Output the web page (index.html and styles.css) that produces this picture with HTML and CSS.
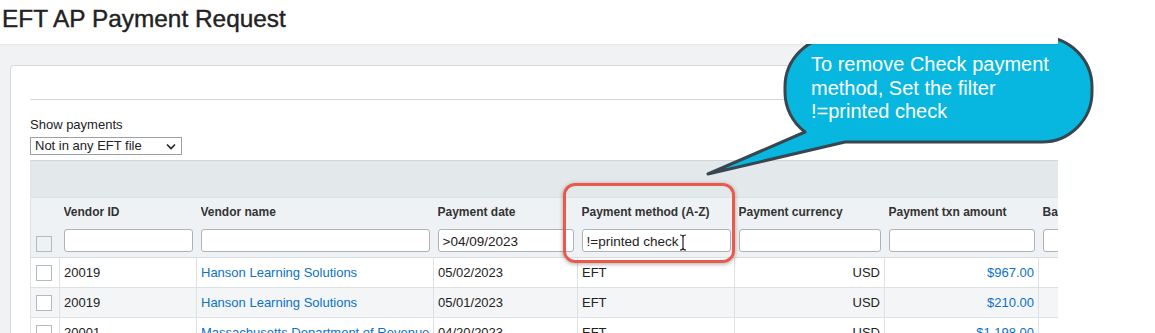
FILE: index.html
```html
<!DOCTYPE html>
<html lang="en">
<head>
<meta charset="utf-8">
<title>EFT AP Payment Request</title>
<link rel="stylesheet" href="styles.css">
</head>
<body>
<div class="app">
  <header class="page-head">
    <h1 class="page-title">EFT AP Payment Request</h1>
  </header>
  <main class="page-body">
    <section class="card">
      <div class="card-rule"></div>
      <div class="filter-block">
        <label class="filter-label" for="show">Show payments</label>
        <div class="select-wrap">
          <select id="show" class="select">
            <option>Not in any EFT file</option>
          </select>
          <svg class="select-chevron" width="10" height="7" viewBox="0 0 10 7"><path d="M1 1.5 L5 5.5 L9 1.5" fill="none" stroke="#222" stroke-width="1.6"/></svg>
        </div>
      </div>
      <div class="grid">
        <div class="grid-toolbar"></div>
        <table class="grid-table">
          <colgroup>
            <col class="c-check"><col class="c-vid"><col class="c-vname"><col class="c-date"><col class="c-method"><col class="c-cur"><col class="c-amt"><col class="c-bank">
          </colgroup>
          <thead>
            <tr>
              <th class="th-check"><span class="check check-head"></span></th>
              <th><div class="th-label">Vendor ID</div><input class="th-filter" type="text" value=""></th>
              <th><div class="th-label">Vendor name</div><input class="th-filter" type="text" value=""></th>
              <th><div class="th-label">Payment date</div><input class="th-filter" type="text" value="&gt;04/09/2023"></th>
              <th><div class="th-label">Payment method (A-Z)</div><input class="th-filter" type="text" value="!=printed check"></th>
              <th><div class="th-label">Payment currency</div><input class="th-filter" type="text" value=""></th>
              <th><div class="th-label">Payment txn amount</div><input class="th-filter" type="text" value=""></th>
              <th><div class="th-label">Bank account</div><input class="th-filter" type="text" value=""></th>
            </tr>
          </thead>
          <tbody>
            <tr>
              <td class="td-check"><span class="check"></span></td>
              <td>20019</td>
              <td><a class="link" href="#">Hanson Learning Solutions</a></td>
              <td>05/02/2023</td>
              <td>EFT</td>
              <td class="num">USD</td>
              <td class="num"><a class="link" href="#">$967.00</a></td>
              <td></td>
            </tr>
            <tr class="alt">
              <td class="td-check"><span class="check"></span></td>
              <td>20019</td>
              <td><a class="link" href="#">Hanson Learning Solutions</a></td>
              <td>05/01/2023</td>
              <td>EFT</td>
              <td class="num">USD</td>
              <td class="num"><a class="link" href="#">$210.00</a></td>
              <td></td>
            </tr>
            <tr>
              <td class="td-check"><span class="check"></span></td>
              <td>20001</td>
              <td><a class="link" href="#">Massachusetts Department of Revenue</a></td>
              <td>04/20/2023</td>
              <td>EFT</td>
              <td class="num">USD</td>
              <td class="num"><a class="link" href="#">$1,198.00</a></td>
              <td></td>
            </tr>
          </tbody>
        </table>
      </div>
    </section>
  </main>
</div>

<div class="highlight"></div>
<svg class="ibeam" width="8" height="17" viewBox="0 0 8 17"><path d="M1 1 Q4 1 4 3 L4 14 Q4 16 1 16 M7 1 Q4 1 4 3 M4 14 Q4 16 7 16" fill="none" stroke="#222" stroke-width="1.2"/></svg>

<div class="callout">
  <svg class="callout-shape" width="400" height="150" viewBox="0 0 400 150">
    <path d="M105 102 L8 144 L145 112 L342 112 A50 50 0 0 0 392 62 L392 57 A50 50 0 0 0 342 7 L135 7 A50 50 0 0 0 85 57 L85 62 A50 50 0 0 0 105 102 Z" fill="#07b7e0" stroke="#37464f" stroke-width="3" stroke-linejoin="round"/>
  </svg>
  <p class="callout-text">To remove Check payment<br>method, Set the filter<br>!=printed check</p>
</div>
</body>
</html>
```

FILE: styles.css
```css
html, body {
  margin: 0;
  padding: 0;
  background: #ffffff;
}
body {
  font-family: "Liberation Sans", Arial, sans-serif;
  color: #222;
  width: 1155px;
  height: 333px;
  overflow: hidden;
  position: relative;
}
.app {
  width: 1058px;
  height: 333px;
  overflow: hidden;
}
.page-head {
  height: 44px;
  background: #fff;
  box-shadow: 0 1px 2px rgba(0, 0, 0, 0.06);
  position: relative;
  z-index: 1;
}
.page-title {
  margin: 0;
  padding: 5px 0 0 2px;
  font-size: 24.4px;
  font-weight: normal;
  color: #222;
  -webkit-text-stroke: 0.4px #222;
  line-height: 28px;
}
.page-body {
  background: #f0f2f4;
  padding: 21px 0 0 10px;
  height: 300px;
}
.card {
  width: 1200px;
  background: #fff;
  border: 1px solid #d3d8db;
  border-radius: 4px 0 0 0;
  padding: 0 0 0 19px;
  height: 300px;
}
.card-rule {
  margin-top: 33px;
  height: 1px;
  background: #d3d8db;
}
.filter-block {
  margin-top: 17px;
}
.filter-label {
  display: block;
  font-size: 13px;
  line-height: 15px;
  color: #222;
}
.select-wrap {
  position: relative;
  width: 152px;
  height: 18px;
  margin-top: 5px;
}
.select {
  appearance: none;
  -webkit-appearance: none;
  display: block;
  width: 152px;
  height: 18px;
  margin: 0;
  border: 1px solid #9aa0a4;
  border-radius: 0;
  background: #fff;
  font-family: "Liberation Sans", Arial, sans-serif;
  font-size: 13px;
  line-height: 16px;
  padding: 0 0 0 4px;
  color: #222;
}
.select-chevron {
  position: absolute;
  right: 6px;
  top: 6px;
}
.grid {
  margin-top: 5px;
  width: 1028px;
  overflow: hidden;
}
.grid-toolbar {
  height: 36px;
  background: #e3e8eb;
  border-top: 1px solid #cfd6da;
  border-left: 1px solid #dfe3e6;
}
.grid-table {
  border-collapse: collapse;
  table-layout: fixed;
  width: 1158px;
  font-size: 13px;
}
.c-check { width: 29px; }
.c-vid { width: 137px; }
.c-vname { width: 237px; }
.c-date { width: 144px; }
.c-method { width: 157px; }
.c-cur { width: 150px; }
.c-amt { width: 154px; }
.c-bank { width: 150px; }
thead tr {
  background: #eff2f4;
}
th {
  text-align: left;
  vertical-align: top;
  padding: 7px 4px 5px 4px;
  border-top: 1px solid #dde2e5;
  border-bottom: 1px solid #d8dde0;
}
th:first-child {
  border-left: 1px solid #dfe3e6;
}
.th-label {
  font-size: 12px;
  font-weight: bold;
  color: #333;
  line-height: 15px;
  white-space: nowrap;
  overflow: hidden;
}
.th-filter {
  display: block;
  box-sizing: border-box;
  width: 100%;
  height: 23px;
  margin-top: 9px;
  border: 1px solid #aab4b9;
  border-radius: 3px;
  background: #fff;
  font-family: "Liberation Sans", Arial, sans-serif;
  font-size: 13.5px;
  color: #222;
  padding: 1px 4px 0 4px;
}
th.th-check {
  vertical-align: bottom;
  padding: 0 0 5px 5px;
}
.check {
  display: block;
  box-sizing: border-box;
  width: 16px;
  height: 16px;
  border: 1px solid #b3babe;
  background: #fff;
}
.check-head {
  background: #eff2f4;
}
td {
  height: 29px;
  padding: 0 4px;
  border-bottom: 1px solid #dde1e4;
  border-right: 1px solid #dde1e4;
  white-space: nowrap;
  overflow: hidden;
  color: #222;
}
td:first-child {
  border-left: 1px solid #dfe3e6;
}
td.td-check {
  padding: 0 0 0 5px;
}
tbody tr {
  background: #fff;
}
tbody tr.alt {
  background: #f3f5f6;
}
td.num {
  text-align: right;
}
.link {
  color: #0b72c6;
  text-decoration: none;
}
.highlight {
  position: absolute;
  left: 563px;
  top: 183px;
  width: 166px;
  height: 74px;
  border: 3px solid #ea5a4c;
  border-radius: 12px;
  box-shadow: 0 1px 4px rgba(0, 0, 0, 0.35);
}
.ibeam {
  position: absolute;
  left: 679px;
  top: 234px;
}
.callout {
  position: absolute;
  left: 700px;
  top: 30px;
  width: 400px;
  height: 150px;
}
.callout-shape {
  position: absolute;
  left: 0;
  top: 0;
}
.callout-text {
  position: absolute;
  left: 111px;
  top: 23px;
  margin: 0;
  font-size: 20px;
  line-height: 23.5px;
  color: #fff;
  white-space: nowrap;
}
```
